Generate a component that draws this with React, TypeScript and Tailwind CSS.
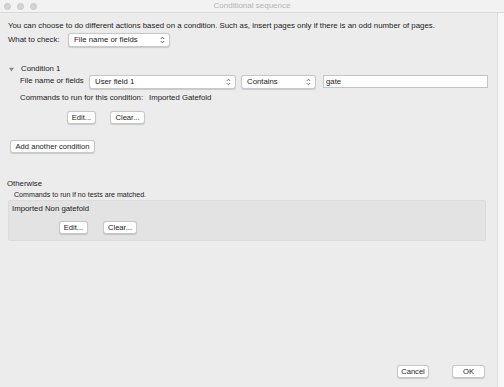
import React from 'react'

const font = { fontFamily: '"Liberation Sans", Arial, sans-serif' }

function Chevrons() {
  return (
    <svg width="5" height="8" viewBox="0 0 5 8" className="shrink-0">
      <path d="M0.8 3 L2.5 1.2 L4.2 3" fill="none" stroke="#555" strokeWidth="0.8" />
      <path d="M0.8 5 L2.5 6.8 L4.2 5" fill="none" stroke="#555" strokeWidth="0.8" />
    </svg>
  )
}

function Popup({ label, w }: { label: string; w: string }) {
  return (
    <div
      className={`${w} h-[14px] flex items-center justify-between pl-[5px] pr-[4px] bg-white rounded-[3px] border border-[#c8c8c8] shadow-[0_0.5px_1px_rgba(0,0,0,0.15)] text-[7.8px] text-[#222]`}
    >
      <span>{label}</span>
      <Chevrons />
    </div>
  )
}

function Btn({ label, w }: { label: string; w: string }) {
  return (
    <div
      className={`${w} h-[13px] flex items-center justify-center bg-white rounded-[3px] border border-[#c8c8c8] shadow-[0_0.5px_1px_rgba(0,0,0,0.15)] text-[7.6px] text-[#222]`}
    >
      {label}
    </div>
  )
}

export default function App() {
  return (
    <div className="w-[504px] h-[387px] bg-[#ececec] flex flex-col overflow-hidden text-[#222]" style={font}>
      {/* title bar */}
      <div className="h-[13px] shrink-0 relative flex items-center bg-[#f2f2f2] border-b border-[#dadada]">
        <div className="flex gap-[6px] pl-[4px]">
          <span className="w-[7px] h-[7px] rounded-full bg-[#d4d4d4] border border-[#c8c8c8]" />
          <span className="w-[7px] h-[7px] rounded-full bg-[#d4d4d4] border border-[#c8c8c8]" />
          <span className="w-[7px] h-[7px] rounded-full bg-[#d4d4d4] border border-[#c8c8c8]" />
        </div>
        <div className="absolute inset-0 flex items-center justify-center text-[8px] text-[#b4b4b4]">
          Conditional sequence
        </div>
      </div>

      <div className="flex flex-1">
        <div className="flex-1 flex flex-col pl-[8px] relative">
          <div className="mt-[8px] h-[10px] leading-[10px] text-[7.85px]">
            You can choose to do different actions based on a condition. Such as, insert pages only if there is an odd number of pages.
          </div>

          <div className="mt-[2px] flex items-center h-[14px]">
            <span className="w-[60px] text-[7.8px]">What to check:</span>
            <Popup label="File name or fields" w="w-[102px]" />
          </div>

          <div className="mt-[17px] flex items-center h-[10px] leading-[10px] text-[7.8px]">
            <svg width="5" height="5" viewBox="0 0 5 5" className="ml-[1px]">
              <path d="M0 0.8 L5 0.8 L2.5 4.5 Z" fill="#8a8a8a" />
            </svg>
            <span className="ml-[7px]">Condition 1</span>
          </div>

          <div className="ml-[12px] flex flex-col">
            <div className="flex items-center h-[15px]">
              <span className="w-[69px] text-[7.8px] self-start mt-[1px]">File name or fields</span>
              <Popup label="User field 1" w="w-[147px]" />
              <div className="ml-[5px]">
                <Popup label="Contains" w="w-[75px]" />
              </div>
              <div className="ml-[7px] w-[165px] h-[13px] bg-white border border-[#c4c4c4] flex items-center pl-[2px] text-[7.8px]">
                gate
              </div>
            </div>

            <div className="mt-[4px] h-[10px] leading-[10px] text-[7.8px] flex">
              <span className="w-[129px]">Commands to run for this condition:</span>
              <span>Imported Gatefold</span>
            </div>

            <div className="mt-[8px] flex pl-[47px] gap-[14px]">
              <Btn label="Edit..." w="w-[29px]" />
              <Btn label="Clear..." w="w-[35px]" />
            </div>
          </div>

          <div className="mt-[16px] ml-[2px]">
            <Btn label="Add another condition" w="w-[85px]" />
          </div>

          <div className="mt-[26px] -ml-[1px] h-[10px] leading-[10px] text-[7.8px]">Otherwise</div>
          <div className="mt-[2px] ml-[6px] h-[9px] leading-[9px] text-[7.1px]">
            Commands to run if no tests are matched.
          </div>

          <div className="w-[478px] h-[41px] bg-[#e3e3e3] border border-[#dcdcdc] rounded-[2px] flex flex-col">
            <div className="mt-[3px] ml-[3px] h-[10px] leading-[10px] text-[7.8px]">Imported Non gatefold</div>
            <div className="mt-[7px] flex pl-[50px] gap-[15px]">
              <Btn label="Edit..." w="w-[29px]" />
              <Btn label="Clear..." w="w-[34px]" />
            </div>
          </div>

          <div className="absolute right-[12px] bottom-[9px] flex gap-[23px]">
            <Btn label="Cancel" w="w-[32px]" />
            <Btn label="OK" w="w-[33px]" />
          </div>
        </div>
        <div className="w-[7px] shrink-0 bg-[#f7f7f7] border-l border-[#dedede]" />
      </div>
    </div>
  )
}
